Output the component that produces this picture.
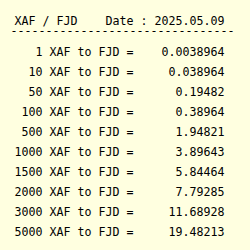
import React from 'react';

const rows = [
  ['1', '0.0038964'],
  ['10', '0.038964'],
  ['50', '0.19482'],
  ['100', '0.38964'],
  ['500', '1.94821'],
  ['1000', '3.89643'],
  ['1500', '5.84464'],
  ['2000', '7.79285'],
  ['3000', '11.68928'],
  ['5000', '19.48213']
];

function line(amount, value) {
  return `${amount.padStart(4, ' ')} XAF to FJD = ${value.padStart(12, ' ')}`;
}

export default function App() {
  return (
    <div
      className="w-[250px] h-[250px] bg-[#ffffe0] text-black text-[11.63px] whitespace-pre pt-[16px]"
      style={{ fontFamily: '"DejaVu Sans Mono", monospace' }}
    >
      <div className="leading-[10px] pl-[14.5px]">XAF / FJD    Date : 2025.05.09</div>
      <div className="leading-[10px] pl-[10.5px]">{'-'.repeat(32)}</div>
      <div className="mt-[6px] pl-[14.5px]">
        {rows.map(([a, v]) => (
          <div key={a} className="leading-[20px]">
            {line(a, v)}
          </div>
        ))}
      </div>
    </div>
  );
}
